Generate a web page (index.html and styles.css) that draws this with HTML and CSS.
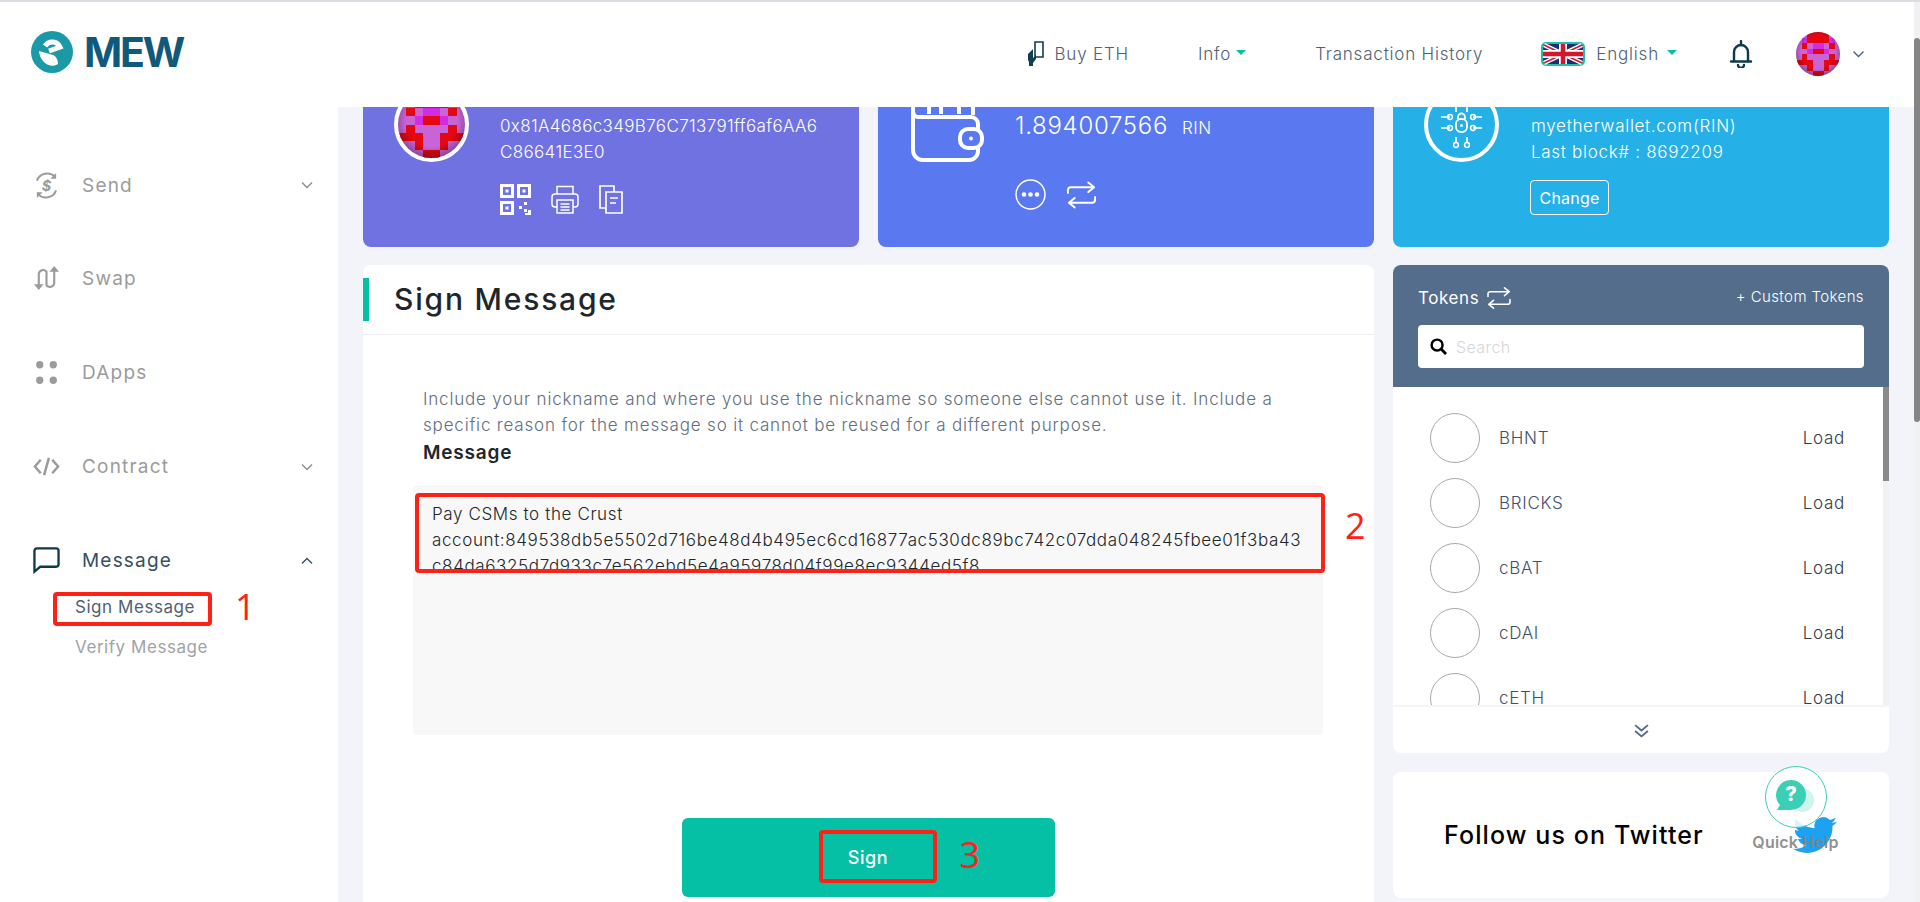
FILE: index.html
```html
<!DOCTYPE html>
<html lang="en">

<head>
    <meta charset="UTF-8">
    <title>MEW - Sign Message</title>
    <link rel="stylesheet" href="styles.css">
</head>

<body>
    <svg class="defs" width="0" height="0">
        <radialGradient id="vignette" cx="50%" cy="45%" r="55%">
            <stop offset="70%" stop-color="#000" stop-opacity="0" />
            <stop offset="100%" stop-color="#000" stop-opacity=".3" />
        </radialGradient>
        <symbol id="blockie" viewBox="0 0 8 8" shape-rendering="crispEdges">
            <rect width="8" height="8" fill="#c864d6" />
            <path fill="#e30812" d="M2 0h4v2H2zM1 2h1v1H1zM6 2h1v1H6zM3 3h2v1H3zM1 4h1v1H1zM6 4h1v1H6zM0 5h3v1H0zM5 5h3v1H5zM2 6h1v1H2zM5 6h1v1H5zM3 7h2v1H3z" />
            <path fill="#d42ae2" d="M1 1h1v1H1zM6 1h1v1H6zM3 2h2v1H3zM2 3h1v1H2zM5 3h1v1H5z" />
            <rect width="8" height="8" fill="url(#vignette)" />
        </symbol>
        <symbol id="chevron" viewBox="0 0 12 8">
            <path d="M1 1.500l5 5 5-5" fill="none" stroke="currentColor" stroke-width="1.400" />
        </symbol>
        <symbol id="swap" viewBox="0 0 32 28">
            <path d="M2 12V9a3 3 0 0 1 3-3h24M23 1l6 5-6 5M30 16v3a3 3 0 0 1-3 3H3M9 17l-6 5 6 5" fill="none" stroke="currentColor" stroke-width="2" stroke-linecap="round" stroke-linejoin="round" />
        </symbol>
    </svg>

    <div class="page">
        <header class="topbar">
            <a class="logo" href="#">
                <svg class="logo-mark" viewBox="0 0 42 42">
                    <circle cx="21" cy="21" r="21" fill="#1b99a6" />
                    <path d="M14 15c4-6 12-5 15 1l-11 4" fill="none" stroke="#fff" stroke-width="5" />
                    <path d="M8 20l14 4c3 1 5 5 5 9-7 5-18-1-19-13z" fill="#fff" />
                </svg>
                <span class="logo-text">MEW</span>
            </a>
            <nav class="topnav">
                <a class="nav-item buy" href="#">
                    <svg class="buy-icon" viewBox="0 0 18 25">
                        <path d="M8 1h8v15H8z" fill="none" stroke="#123f4d" stroke-width="1.600" />
                        <path d="M1 13l5-5v9l3-3v4l-3 4v3H2v-4l-1-2z" fill="#123f4d" />
                    </svg>
                    Buy ETH
                </a>
                <a class="nav-item info" href="#">Info<span class="caret"></span></a>
                <a class="nav-item history" href="#">Transaction History</a>
                <a class="nav-item lang" href="#">
                    <svg class="flag" viewBox="0 0 44 24">
                        <rect x="1" y="1" width="42" height="22" rx="4" fill="#1c2f6e" stroke="#1fbfa8" stroke-width="2" />
                        <path d="M3 3l38 18M41 3L3 21" stroke="#fff" stroke-width="4.500" />
                        <path d="M3 3l38 18M41 3L3 21" stroke="#d3182d" stroke-width="1.500" />
                        <path d="M22 2v20M2 12h40" stroke="#fff" stroke-width="8" />
                        <path d="M22 2v20M2 12h40" stroke="#d3182d" stroke-width="4.500" />
                    </svg>
                    English<span class="caret"></span>
                </a>
                <svg class="bell" viewBox="0 0 24 28">
                    <path d="M12 1v4M5 21V12a7 7 0 0 1 14 0v9M2 21.500h20M9 25a3 3 0 0 0 6 0" fill="none" stroke="#0d3b49" stroke-width="2.400" stroke-linecap="round" />
                </svg>
                <svg class="top-avatar"><use href="#blockie" /></svg>
                <svg class="top-chevron"><use href="#chevron" /></svg>
            </nav>
        </header>

        <div class="layout">
            <aside class="sidebar">
                <a class="side-item" href="#">
                    <svg class="side-icon" viewBox="0 0 28 28">
                        <path d="M4 9a11.500 11.500 0 0 1 19-4M24 19a11.500 11.500 0 0 1-19 4" fill="none" stroke="currentColor" stroke-width="2" />
                        <path d="M24 1v6h-6M4 27v-6h6" fill="currentColor" />
                        <text x="14" y="20" text-anchor="middle" class="dollar">$</text>
                    </svg>
                    <span class="side-label">Send</span>
                    <svg class="side-chevron"><use href="#chevron" /></svg>
                </a>
                <a class="side-item" href="#">
                    <svg class="side-icon" viewBox="0 0 28 28">
                        <path d="M6 22V9a4.500 4.500 0 0 1 8-2v14a4.500 4.500 0 0 0 8-2V5" fill="none" stroke="currentColor" stroke-width="2.200" />
                        <path d="M1 20h10l-5 6zM17 7h10l-5-6z" fill="currentColor" />
                    </svg>
                    <span class="side-label">Swap</span>
                </a>
                <a class="side-item" href="#">
                    <svg class="side-icon" viewBox="0 0 28 28">
                        <circle cx="7" cy="6" r="3.800" fill="currentColor" />
                        <circle cx="21" cy="6" r="3.800" fill="currentColor" />
                        <circle cx="7" cy="22" r="3.800" fill="currentColor" />
                        <circle cx="21" cy="22" r="3.800" fill="currentColor" />
                    </svg>
                    <span class="side-label">DApps</span>
                </a>
                <a class="side-item" href="#">
                    <svg class="side-icon" viewBox="0 0 28 28">
                        <path d="M8 7l-6 7 6 7M20 7l6 7-6 7M16.500 5l-5 18" fill="none" stroke="currentColor" stroke-width="2.600" />
                    </svg>
                    <span class="side-label">Contract</span>
                    <svg class="side-chevron"><use href="#chevron" /></svg>
                </a>
                <a class="side-item active" href="#">
                    <svg class="side-icon" viewBox="0 0 28 28">
                        <path d="M4 1.500h20a2.500 2.500 0 0 1 2.500 2.500v14a2.500 2.500 0 0 1-2.500 2.500H7.500l-6 5V4A2.500 2.500 0 0 1 4 1.500z" fill="none" stroke="currentColor" stroke-width="2.400" />
                    </svg>
                    <span class="side-label">Message</span>
                    <svg class="side-chevron up"><use href="#chevron" /></svg>
                </a>
                <div class="sub-menu">
                    <a class="sub-item current" href="#">
                        Sign Message
                        <span class="red-box box-side"></span>
                        <span class="red-num num-side">1</span>
                    </a>
                    <a class="sub-item" href="#">Verify Message</a>
                </div>
            </aside>

            <main class="content">
                <section class="info-card address-card">
                    <svg class="card-avatar"><use href="#blockie" /></svg>
                    <div class="card-text">
                        <p class="card-line">0x81A4686c349B76C713791ff6af6AA6<br>C86641E3E0</p>
                        <div class="card-actions">
                            <svg class="act-icon" viewBox="0 0 31 31">
                                <path d="M1.500 1.500h11v11h-11zM18.500 1.500h11v11h-11zM1.500 18.500h11v11h-11z" fill="none" stroke="#fff" stroke-width="3" />
                                <path d="M5.500 5.500h3v3h-3zM22.500 5.500h3v3h-3zM5.500 22.500h3v3h-3zM19 22h3v3h-3zM24 18h3v3h-3zM24 25h3v3h-3z M28 26h3v5h-6v-2h3z" fill="#fff" />
                            </svg>
                            <svg class="act-icon print" viewBox="0 0 28 29">
                                <path d="M6 9V1.500h16V9M6 22H4a3 3 0 0 1-3-3v-7a3 3 0 0 1 3-3h20a3 3 0 0 1 3 3v7a3 3 0 0 1-3 3h-2M6 15h16v13H6zM9.500 19h9M9.500 22h9M9.500 25h9" fill="none" stroke="#fff" stroke-width="1.500" />
                            </svg>
                            <svg class="act-icon copy" viewBox="0 0 24 29">
                                <path d="M7 23H1V1h14v6M7 7h16v21H7zM11 13h8M11 18h6" fill="none" stroke="#fff" stroke-width="1.700" />
                            </svg>
                        </div>
                    </div>
                </section>

                <section class="info-card balance-card">
                    <svg class="card-icon" viewBox="0 0 75 75">
                        <path d="M4 25v38a10 10 0 0 0 10 10h46a9 9 0 0 0 9-9v-3M4 25a6 6 0 0 0 6 5h52a7 7 0 0 1 7 7v5M4 25v-7a6 6 0 0 1 6-6h48a6 6 0 0 1 6 6v10M20 15v12M32 15v12M50 15v12" fill="none" stroke="#fff" stroke-width="4" />
                        <rect x="51" y="42" width="22" height="19" rx="8" fill="none" stroke="#fff" stroke-width="4" />
                        <circle cx="62" cy="51.500" r="2" fill="#fff" />
                    </svg>
                    <div class="card-text">
                        <p class="balance"><span class="amount">1.894007566</span><span class="unit">RIN</span></p>
                        <div class="card-actions low">
                            <svg class="act-icon" viewBox="0 0 31 31">
                                <circle cx="15.500" cy="15.500" r="14.500" fill="none" stroke="#fff" stroke-width="1.500" />
                                <circle cx="9" cy="15.500" r="2.300" fill="#fff" />
                                <circle cx="15.500" cy="15.500" r="2.300" fill="#fff" />
                                <circle cx="22" cy="15.500" r="2.300" fill="#fff" />
                            </svg>
                            <svg class="act-swap"><use href="#swap" /></svg>
                        </div>
                    </div>
                </section>

                <section class="info-card network-card">
                    <svg class="card-icon" viewBox="0 0 75 75">
                        <circle cx="37.500" cy="37.500" r="35.500" fill="none" stroke="#fff" stroke-width="4" />
                        <path d="M32 16v9M43 16v9M32 50v6M43 50v6M17 30h9M17 41h9M49 30h9M49 41h9" stroke="#fff" stroke-width="1.700" />
                        <circle cx="32" cy="58" r="2.400" fill="none" stroke="#fff" stroke-width="1.500" />
                        <circle cx="43" cy="58" r="2.400" fill="none" stroke="#fff" stroke-width="1.500" />
                        <circle cx="26" cy="30" r="2.400" fill="none" stroke="#fff" stroke-width="1.500" />
                        <circle cx="26" cy="41" r="2.400" fill="none" stroke="#fff" stroke-width="1.500" />
                        <circle cx="49" cy="30" r="2.400" fill="none" stroke="#fff" stroke-width="1.500" />
                        <circle cx="49" cy="41" r="2.400" fill="none" stroke="#fff" stroke-width="1.500" />
                        <rect x="32" y="32" width="11" height="13" rx="5" fill="none" stroke="#fff" stroke-width="1.800" />
                        <path d="M34 32v-2a3.500 3.500 0 0 1 7 0v2" fill="none" stroke="#fff" stroke-width="1.800" />
                        <circle cx="37.500" cy="38.500" r="1.500" fill="#fff" />
                    </svg>
                    <div class="card-text">
                        <p class="card-line net-line">myetherwallet.com(RIN)<br>Last block# : 8692209</p>
                        <button class="change-btn">Change</button>
                    </div>
                </section>

                <section class="sign-card">
                    <h1 class="sign-title">Sign Message</h1>
                    <div class="sign-body">
                        <p class="sign-desc">Include your nickname and where you use the nickname so someone else cannot use it. Include a<br>specific reason for the message so it cannot be reused for a different purpose.</p>
                        <h2 class="sign-label">Message</h2>
                        <div class="message-box">
                            <p class="message-text">Pay CSMs to the Crust<br>account:849538db5e5502d716be48d4b495ec6cd16877ac530dc89bc742c07dda048245fbee01f3ba43<br>c84da6325d7d933c7e562ebd5e4a95978d04f99e8ec9344ed5f8</p>
                            <span class="red-box box-message"></span>
                            <span class="red-num num-message">2</span>
                        </div>
                        <button class="sign-btn">
                            Sign
                            <span class="red-box box-sign"></span>
                            <span class="red-num num-sign">3</span>
                        </button>
                    </div>
                </section>

                <div class="right-col">
                    <section class="tokens-card">
                        <div class="tokens-head">
                            <div class="tokens-top">
                                <span class="tokens-title">Tokens <svg class="tokens-swap"><use href="#swap" /></svg></span>
                                <a class="custom-link" href="#">+ Custom Tokens</a>
                            </div>
                            <div class="search-box">
                                <svg class="search-icon" viewBox="0 0 18 18">
                                    <circle cx="7.500" cy="7.500" r="5.800" fill="none" stroke="#000" stroke-width="2.600" />
                                    <path d="M12 12l5 5" stroke="#000" stroke-width="3" />
                                </svg>
                                <span class="search-ph">Search</span>
                            </div>
                        </div>
                        <ul class="token-list">
                            <li class="token-row"><span class="token-logo"></span><span class="token-name">BHNT</span><span class="token-load">Load</span></li>
                            <li class="token-row"><span class="token-logo"></span><span class="token-name">BRICKS</span><span class="token-load">Load</span></li>
                            <li class="token-row"><span class="token-logo"></span><span class="token-name">cBAT</span><span class="token-load">Load</span></li>
                            <li class="token-row"><span class="token-logo"></span><span class="token-name">cDAI</span><span class="token-load">Load</span></li>
                            <li class="token-row"><span class="token-logo"></span><span class="token-name">cETH</span><span class="token-load">Load</span></li>
                        </ul>
                        <div class="tokens-foot">
                            <svg class="more-icon" viewBox="0 0 14 14">
                                <path d="M1 2l6 5 6-5M1 7.500l6 5 6-5" fill="none" stroke="#4f6b8a" stroke-width="1.700" />
                            </svg>
                        </div>
                    </section>
                    <section class="twitter-card">
                        <span class="twitter-text">Follow us on Twitter</span>
                        <svg class="twitter-bird" viewBox="0 0 24 24">
                            <path fill="#1da1f2" d="M23.953 4.570a10 10 0 01-2.825.775 4.958 4.958 0 002.163-2.723c-.951.555-2.005.959-3.127 1.184a4.920 4.920 0 00-8.384 4.482C7.690 8.095 4.067 6.130 1.640 3.162a4.822 4.822 0 00-.666 2.475c0 1.710.870 3.213 2.188 4.096a4.904 4.904 0 01-2.228-.616v.060a4.923 4.923 0 003.946 4.827 4.996 4.996 0 01-2.212.085 4.936 4.936 0 004.604 3.417 9.867 9.867 0 01-6.102 2.105c-.390 0-.779-.023-1.170-.067a13.995 13.995 0 007.557 2.209c9.053 0 13.998-7.496 13.998-13.985 0-.210 0-.420-.015-.630A9.935 9.935 0 0024 4.590z" />
                        </svg>
                    </section>
                </div>
            </main>
        </div>

        <div class="quick-help">
            <span class="help-ring">
                <svg class="help-icon" viewBox="0 0 40 36">
                    <circle cx="26" cy="21" r="12" fill="#cff4ee" />
                    <path d="M15 1a15 15 0 1 1 0 30H1l3-5A15 15 0 0 1 15 1z" fill="#3bcfb6" />
                    <text x="15" y="22" text-anchor="middle" class="help-mark">?</text>
                </svg>
            </span>
            <span class="help-label">Quick Help</span>
        </div>
        <div class="page-scroll"></div>
    </div>
</body>

</html>
```

FILE: styles.css
```css
* {
    box-sizing: border-box;
}

html,
body {
    margin: 0;
    height: 100%;
    overflow: hidden;
}

body {
    font-family: Inter, "Open Sans", sans-serif;
    background-color: #f2f4fa;
    color: #506175;
}

a {
    color: inherit;
    text-decoration: none;
}

p,
h1,
h2,
ul {
    margin: 0;
    padding: 0;
}

.defs {
    position: absolute;
}

.page {
    position: relative;
    height: 902px;
    overflow: hidden;
}

/* top bar */
.topbar {
    position: relative;
    z-index: 2;
    height: 107px;
    display: flex;
    align-items: center;
    justify-content: space-between;
    padding: 0 55px 0 31px;
    background-color: #fff;
    border-top: 2px solid #dcdde2;
}

.logo {
    display: flex;
    align-items: center;
    gap: 11px;
    margin-top: -6px;
}

.logo-mark {
    width: 42px;
    height: 42px;
}

.logo-text {
    font-size: 41px;
    font-weight: 700;
    line-height: 42px;
    color: #10597a;
    letter-spacing: -2.200px;
}

.topnav {
    display: flex;
    align-items: center;
    margin-top: -2px;
    font-size: 17px;
    font-weight: 300;
    letter-spacing: .8px;
}

.nav-item {
    display: flex;
    align-items: center;
}

.buy {
    gap: 10px;
    margin-right: 69px;
}

.buy-icon {
    width: 18px;
    height: 25px;
}

.info {
    margin-right: 69px;
}

.history {
    margin-right: 58px;
}

.lang {
    gap: 11px;
    margin-right: 52px;
}

.flag {
    width: 44px;
    height: 24px;
}

.caret {
    width: 0;
    height: 0;
    margin-left: 5px;
    margin-bottom: 3px;
    border-left: 5px solid transparent;
    border-right: 5px solid transparent;
    border-top: 5px solid #05c0a5;
}

.lang .caret {
    margin-left: -3px;
}

.bell {
    width: 24px;
    height: 28px;
    margin-right: 43px;
}

.top-avatar {
    width: 44px;
    height: 44px;
    border-radius: 50%;
    margin-right: 12px;
}

.top-chevron {
    width: 13px;
    height: 8px;
    color: #506175;
}

/* layout */
.layout {
    display: flex;
    height: 795px;
}

.sidebar {
    width: 338px;
    flex-shrink: 0;
    padding: 58px 25px 0 33px;
    background-color: #fff;
    display: flex;
    flex-direction: column;
}

.side-item {
    height: 40px;
    margin-bottom: 53.900px;
    display: flex;
    align-items: center;
    color: #9b9b9b;
}

.side-icon {
    width: 27px;
    height: 27px;
    margin-right: 22px;
}

.dollar {
    font-size: 15px;
    font-weight: 700;
    fill: currentColor;
    font-style: italic;
}

.side-label {
    font-size: 19px;
    letter-spacing: 1.200px;
    flex: 1;
}

.side-chevron {
    width: 12px;
    height: 8px;
    color: #8a8f96;
}

.side-chevron.up {
    transform: rotate(180deg);
    color: #35505f;
}

.active {
    color: #0d3b49;
    margin-bottom: 6px;
}

.active .side-label {
    color: #35505f;
}

.sub-menu {
    display: flex;
    flex-direction: column;
    padding-left: 42px;
}

.sub-item {
    position: relative;
    height: 40px;
    display: flex;
    align-items: center;
    font-size: 17px;
    letter-spacing: .55px;
    color: #a0a3a8;
}

.sub-item.current {
    color: #506175;
}

/* annotations on top of the screenshot */
.red-box {
    position: absolute;
    border: 4px solid #ff2016;
    border-radius: 4px;
    pointer-events: none;
}

.red-num {
    position: absolute;
    font-family: "Open Sans", sans-serif;
    font-weight: 400;
    font-size: 36px;
    line-height: 40px;
    letter-spacing: 0;
    color: #ff2016;
}

.box-side {
    left: -22px;
    top: 5px;
    width: 159px;
    height: 34px;
}

.num-side {
    left: 160px;
    top: 0;
}

.box-message {
    left: 2px;
    top: 8px;
    width: 910px;
    height: 80px;
}

.num-message {
    left: 932px;
    top: 21px;
}

.box-sign {
    left: 137px;
    top: 12px;
    width: 118px;
    height: 53px;
}

.num-sign {
    left: 278px;
    top: 17px;
}

/* main */
.content {
    flex: 1;
    margin-top: -40px;
    padding-left: 25px;
    display: grid;
    grid-template-columns: repeat(3, 496px);
    grid-template-rows: 180px auto;
    column-gap: 19px;
    row-gap: 18px;
    align-content: start;
}

.info-card {
    display: flex;
    padding-top: 20px;
    color: #fff;
    border-radius: 8px;
    font-weight: 300;
}

.address-card {
    padding-left: 31px;
    gap: 31px;
    background-color: #6f72e0;
}

.balance-card {
    padding-left: 31px;
    gap: 31px;
    background-color: #5a78f0;
}

.network-card {
    padding-left: 31px;
    gap: 32px;
    background-color: #25b0e8;
}

.card-avatar {
    width: 75px;
    height: 75px;
    border: 4px solid #fff;
    border-radius: 50%;
    background-color: #fff;
}

.card-icon {
    width: 75px;
    height: 75px;
    flex-shrink: 0;
}

.card-text {
    padding-top: 26px;
}

.card-line {
    font-size: 17px;
    line-height: 26px;
    letter-spacing: .35px;
    white-space: nowrap;
}

.net-line {
    letter-spacing: .7px;
}

.card-actions {
    display: flex;
    align-items: center;
    gap: 20px;
    margin-top: 19px;
}

.card-actions.low {
    margin-top: 38px;
}

.act-icon {
    width: 31px;
    height: 31px;
    flex-shrink: 0;
}

.act-icon.print {
    width: 28px;
    height: 29px;
}

.act-icon.copy {
    width: 24px;
    height: 29px;
}

.act-swap {
    width: 31px;
    height: 28px;
    color: #fff;
}

.balance {
    display: flex;
    align-items: baseline;
    gap: 14px;
    line-height: 26px;
    white-space: nowrap;
}

.amount {
    font-size: 24px;
    letter-spacing: .7px;
}

.unit {
    font-size: 17px;
    letter-spacing: .5px;
}

.change-btn {
    display: block;
    width: 79px;
    height: 35px;
    margin-top: 15px;
    margin-left: -1px;
    padding: 0;
    font: inherit;
    font-size: 16px;
    font-weight: 400;
    letter-spacing: .2px;
    color: #fff;
    background: transparent;
    border: 1px solid #fff;
    border-radius: 4px;
}

/* sign message */
.sign-card {
    grid-column: span 2;
    height: 680px;
    background-color: #fff;
    border-radius: 8px 8px 0 0;
}

.sign-title {
    position: relative;
    height: 57px;
    margin-top: 13px;
    padding-left: 31px;
    font-size: 30px;
    font-weight: 500;
    line-height: 43px;
    color: #20262c;
    letter-spacing: 1.800px;
    border-bottom: 1px solid #eceef2;
}

.sign-title::before {
    content: "";
    position: absolute;
    left: 0;
    top: 0;
    width: 6px;
    height: 43px;
    background-color: #05c0a5;
}

.sign-body {
    padding: 51px 51px 0 50px;
}

.sign-desc {
    padding-left: 10px;
    font-size: 17px;
    font-weight: 300;
    line-height: 26px;
    letter-spacing: .82px;
    color: #5f6e80;
    white-space: nowrap;
}

.sign-label {
    margin-top: 2px;
    padding-left: 10px;
    font-size: 19px;
    font-weight: 600;
    line-height: 26px;
    letter-spacing: .8px;
    color: #20262c;
}

.message-box {
    position: relative;
    height: 250px;
    margin-top: 19px;
    padding: 16px 19px;
    background-color: #f8f8f8;
    border-radius: 4px;
}

.message-text {
    font-size: 17px;
    font-weight: 300;
    line-height: 26px;
    letter-spacing: .62px;
    color: #20262c;
    white-space: nowrap;
}

.sign-btn {
    position: relative;
    display: block;
    width: 373px;
    height: 79px;
    margin: 83px auto 0;
    padding: 0;
    font: inherit;
    font-size: 18px;
    font-weight: 500;
    letter-spacing: .6px;
    color: #fff;
    background-color: #05c0a5;
    border: 0;
    border-radius: 6px;
}

/* right column */
.right-col {
    display: flex;
    flex-direction: column;
    gap: 19px;
}

.tokens-card {
    background-color: #fff;
    border-radius: 8px;
    overflow: hidden;
}

.tokens-head {
    height: 122px;
    padding: 18px 25px 0;
    background-color: #536d8b;
    color: #fff;
}

.tokens-top {
    display: flex;
    align-items: center;
    justify-content: space-between;
    height: 30px;
    margin-bottom: 12px;
}

.tokens-title {
    display: flex;
    align-items: center;
    gap: 7px;
    font-size: 17px;
    letter-spacing: .6px;
}

.tokens-swap {
    width: 26px;
    height: 22px;
    color: #fff;
}

.custom-link {
    margin-top: -4px;
    font-size: 15px;
    letter-spacing: .4px;
    font-weight: 300;
}

.search-box {
    height: 43px;
    display: flex;
    align-items: center;
    gap: 9px;
    padding-left: 12px;
    background-color: #fff;
    border-radius: 4px;
}

.search-icon {
    width: 17px;
    height: 17px;
}

.search-ph {
    font-size: 16px;
    color: #d4d6d9;
    font-weight: 300;
    letter-spacing: .4px;
}

.token-list {
    list-style: none;
    height: 318px;
    padding: 26px 44px 0 37px;
    overflow: hidden;
    background-image: linear-gradient(#8a8a8a, #8a8a8a), linear-gradient(#f1f1f3, #f1f1f3);
    background-repeat: no-repeat;
    background-size: 6px 94px, 6px 100%;
    background-position: right top, right top;
}

.token-row {
    display: flex;
    align-items: center;
    height: 50px;
    margin-bottom: 15px;
    font-size: 17px;
    letter-spacing: .7px;
    font-weight: 300;
}

.token-logo {
    width: 50px;
    height: 50px;
    border: 1px solid #a8a8a8;
    border-radius: 50%;
    margin-right: 19px;
}

.token-name {
    flex: 1;
    color: #41516a;
}

.token-load {
    color: #2f3b49;
}

.tokens-foot {
    height: 48px;
    display: flex;
    align-items: center;
    justify-content: center;
    border-top: 2px solid #f5f5f7;
}

.more-icon {
    width: 15px;
    height: 15px;
}

.twitter-card {
    position: relative;
    height: 126px;
    display: flex;
    align-items: center;
    padding-left: 51px;
    background-color: #fff;
    border-radius: 8px;
}

.twitter-text {
    font-size: 25px;
    font-weight: 500;
    color: #000;
    letter-spacing: 1.100px;
}

.twitter-bird {
    width: 44px;
    height: 44px;
    margin-left: auto;
    margin-right: 52px;
}

/* floating help button */
.quick-help {
    position: absolute;
    z-index: 3;
    left: 1753px;
    top: 766px;
    width: 85px;
    display: flex;
    flex-direction: column;
    align-items: center;
}

.help-ring {
    width: 62px;
    height: 62px;
    display: flex;
    align-items: center;
    justify-content: center;
    border: 1.500px solid #3bcfb6;
    border-radius: 50%;
    background-color: rgba(255, 255, 255, .85);
}

.help-icon {
    width: 40px;
    height: 36px;
}

.help-mark {
    font-size: 20px;
    font-weight: 800;
    fill: #fff;
}

.help-label {
    margin-top: 5px;
    font-size: 16px;
    font-weight: 600;
    line-height: 18px;
    letter-spacing: .2px;
    color: rgba(130, 130, 130, .9);
    white-space: nowrap;
}

/* window scrollbar */
.page-scroll {
    position: absolute;
    z-index: 4;
    right: 0;
    top: 2px;
    width: 6px;
    height: 900px;
    background-color: #f1f1f3;
}

.page-scroll::after {
    content: "";
    display: block;
    margin-top: 36px;
    height: 384px;
    background-color: #858585;
    border-radius: 3px;
}
```
